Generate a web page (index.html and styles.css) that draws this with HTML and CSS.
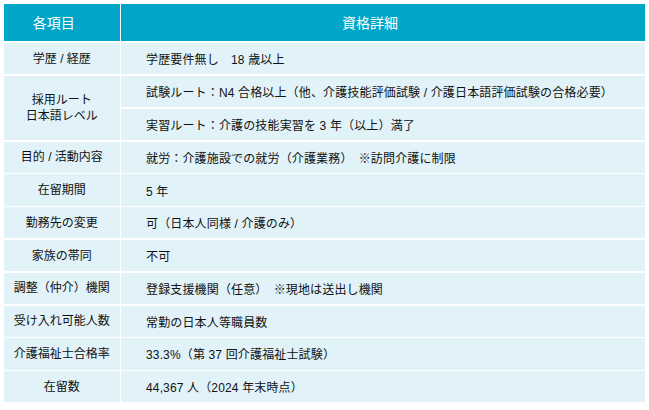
FILE: index.html
```html
<!DOCTYPE html>
<html lang="ja">
<head>
<meta charset="utf-8">
<title>資格詳細</title>
<link rel="stylesheet" href="styles.css">
</head>
<body>
<div class="page">
  <div class="spec">
    <div class="head head-item">各項目</div>
    <div class="head head-detail">資格詳細</div>

    <div class="label">学歴 / 経歴</div>
    <div class="value">学歴要件無し　18 歳以上</div>

    <div class="label span2">採用ルート<br>日本語レベル</div>
    <div class="value">試験ルート：N4 合格以上（他、介護技能評価試験 / 介護日本語評価試験の合格必要）</div>
    <div class="value">実習ルート：介護の技能実習を 3 年（以上）満了</div>

    <div class="label">目的 / 活動内容</div>
    <div class="value">就労：介護施設での就労（介護業務）　※訪問介護に制限</div>

    <div class="label">在留期間</div>
    <div class="value">5 年</div>

    <div class="label">勤務先の変更</div>
    <div class="value">可（日本人同様 / 介護のみ）</div>

    <div class="label">家族の帯同</div>
    <div class="value">不可</div>

    <div class="label">調整（仲介）機関</div>
    <div class="value">登録支援機関（任意）　※現地は送出し機関</div>

    <div class="label">受け入れ可能人数</div>
    <div class="value">常勤の日本人等職員数</div>

    <div class="label">介護福祉士合格率</div>
    <div class="value">33.3%（第 37 回介護福祉士試験）</div>

    <div class="label">在留数</div>
    <div class="value">44,367 人（2024 年末時点）</div>
  </div>
</div>
</body>
</html>
```

FILE: styles.css
```css
html, body {
  margin: 0;
  padding: 0;
  background: #ffffff;
}

.page {
  padding: 4px 4px 0 4px;
  font-family: "Liberation Sans", "Noto Sans CJK JP", sans-serif;
  color: #111111;
}

.spec {
  display: grid;
  grid-template-columns: 115.7px 1fr;
  grid-auto-rows: 31.2px;
  grid-template-rows: 37.7px;
  column-gap: 1.3px;
  row-gap: 1.6px;
}

.head {
  background: #00a6c8;
  color: #ffffff;
  font-size: 14px;
  display: flex;
  align-items: center;
  justify-content: center;
  margin-bottom: 1px;
}

.head-item {
  padding-right: 16px;
}

.head-detail {
  padding-right: 26px;
}

.label,
.value {
  background: #e1f3f9;
  font-size: 12px;
  display: flex;
  align-items: center;
}

.label {
  justify-content: center;
  text-align: center;
  line-height: 16px;
}

.value {
  padding-left: 25px;
  white-space: nowrap;
  letter-spacing: 0.15px;
}

.span2 {
  grid-row: span 2;
}
```
